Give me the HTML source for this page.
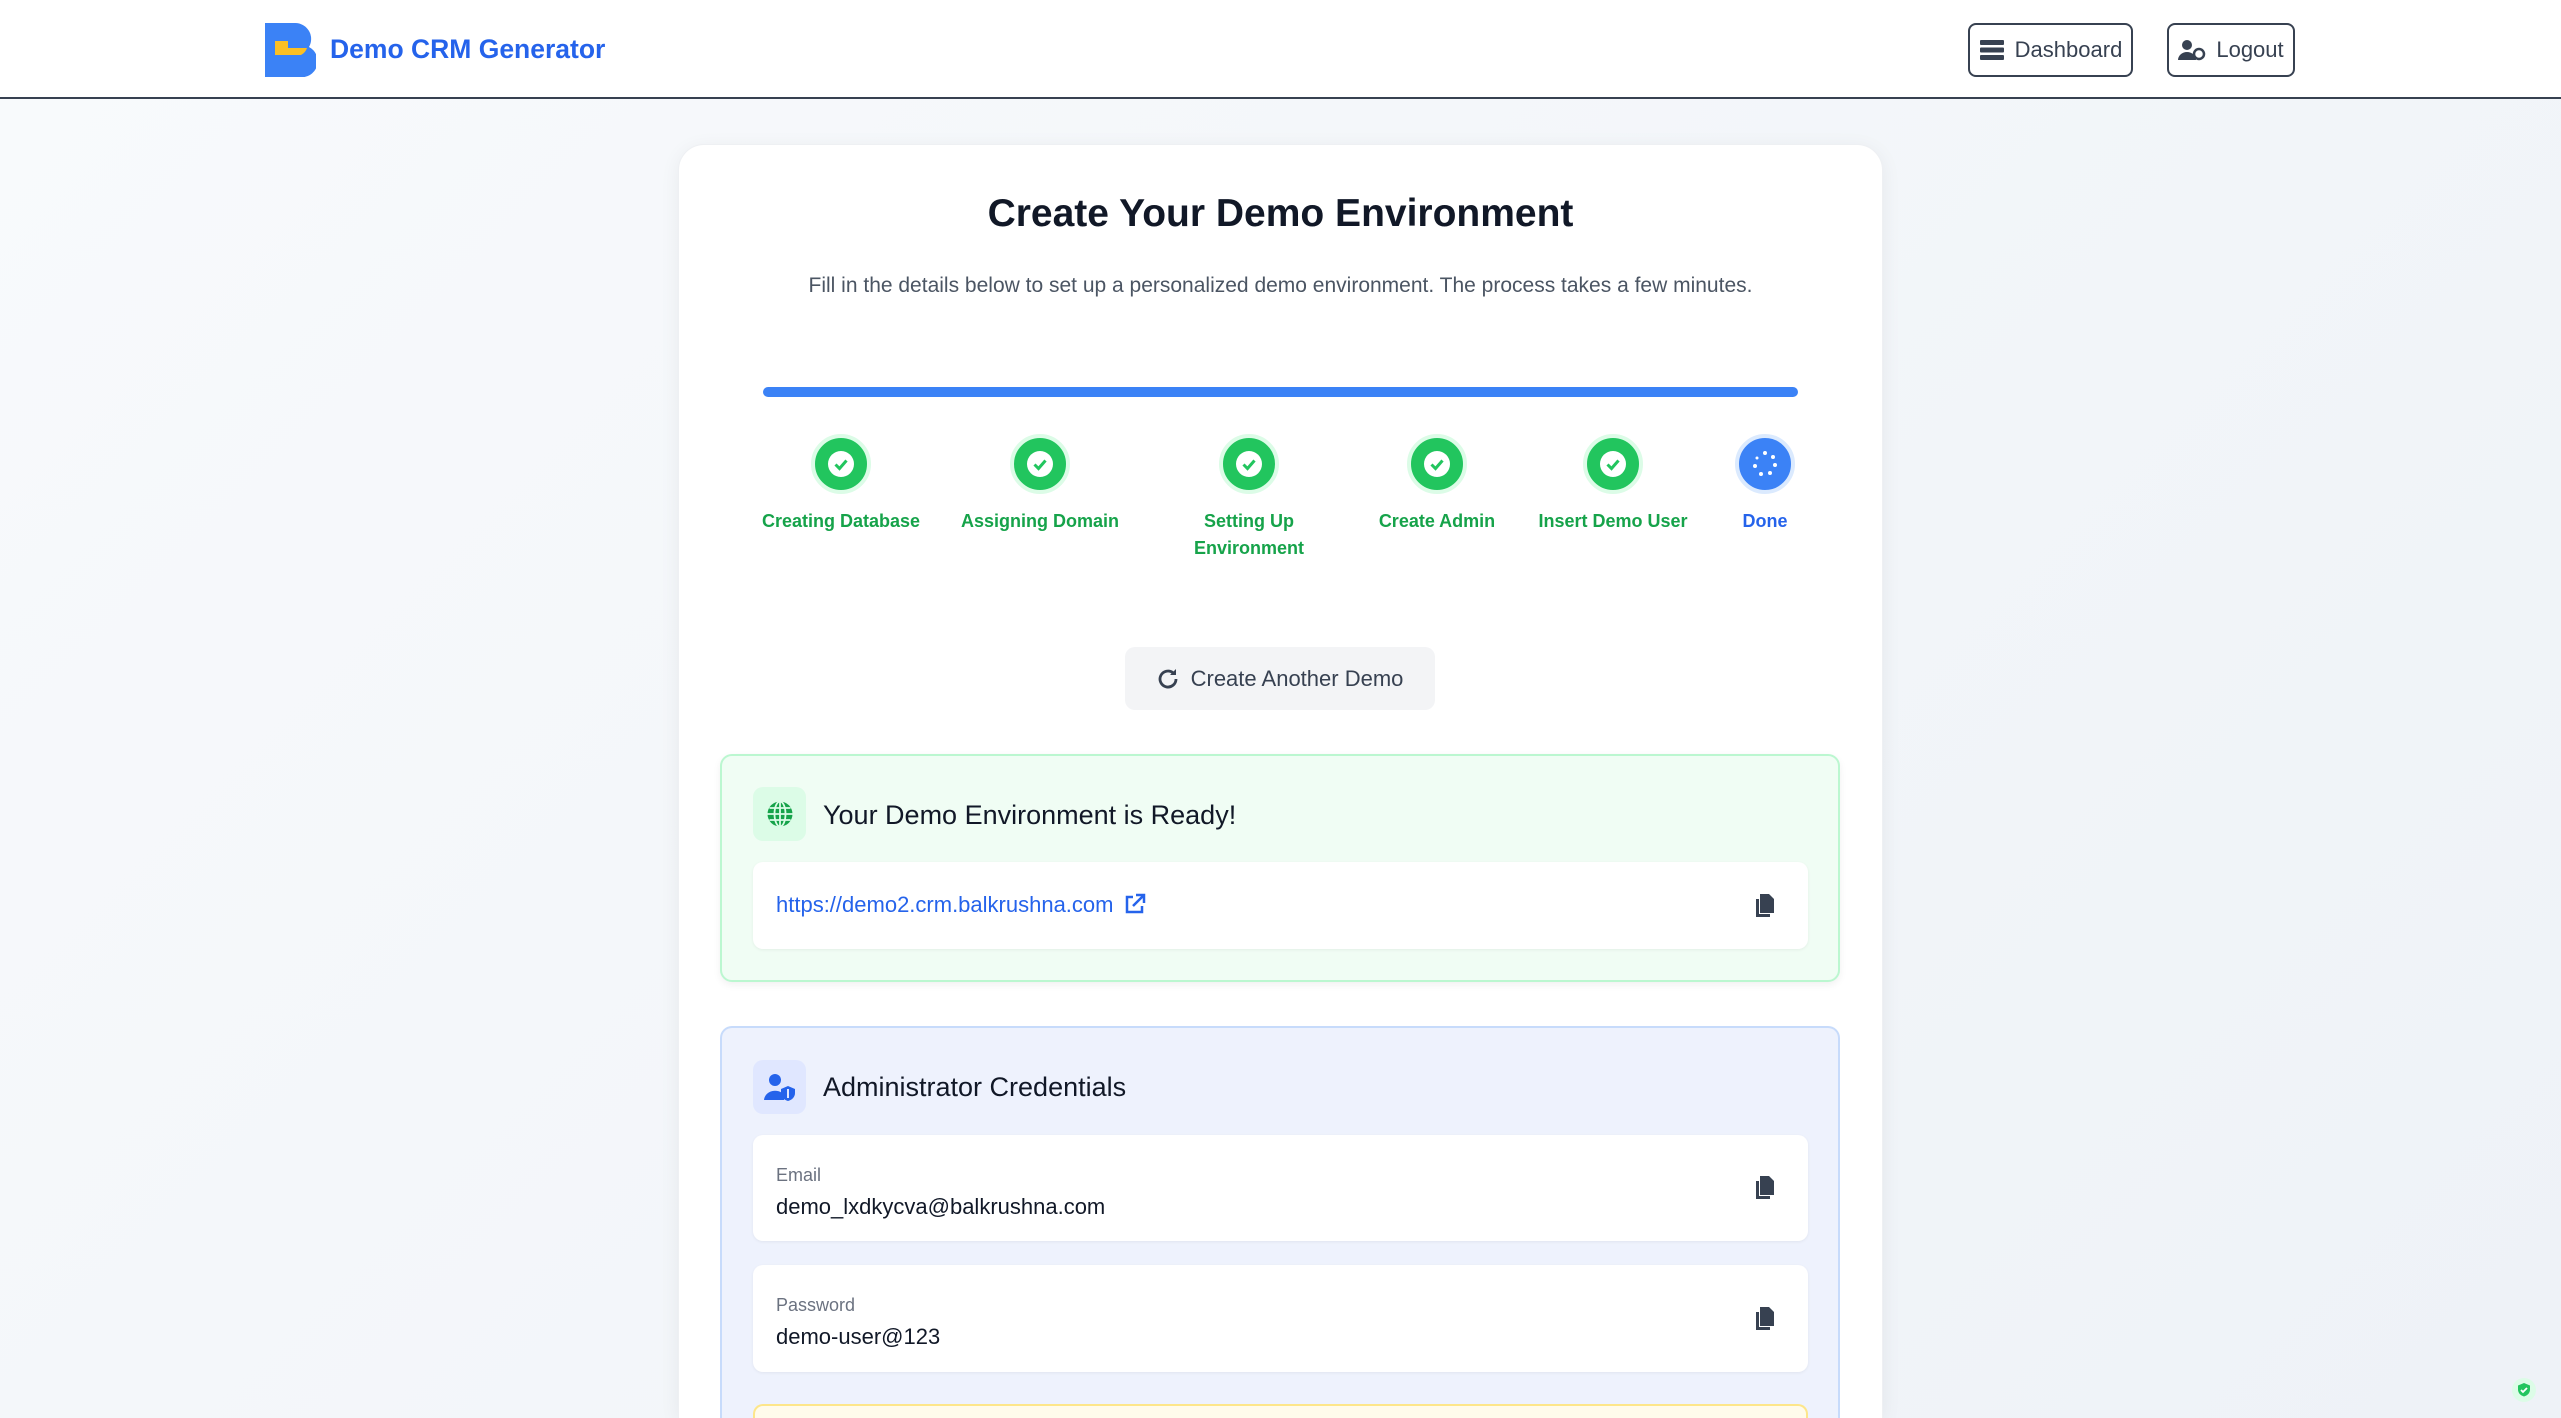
<!DOCTYPE html>
<html style="overflow:hidden;height:1418px"><head><meta charset="utf-8"><style>
*{box-sizing:border-box;margin:0;padding:0}
html,body{width:2561px;height:1418px;overflow:hidden}
body{font-family:"Liberation Sans",sans-serif;color:#111827}
#wrap{position:relative;width:2561px;height:1418px;overflow:hidden;background:linear-gradient(135deg,#f8fafc,#eef2f7)}
.abs{position:absolute}
header{position:absolute;left:0;top:0;width:2561px;height:99px;background:#fff;border-bottom:2px solid #374151}
.btn{position:absolute;top:23px;height:54px;border:2px solid #374151;border-radius:8px;background:#fff;display:flex;align-items:center;justify-content:center;gap:10px;font-size:22px;color:#374151}
.card{left:678px;top:144px;width:1205px;height:1274px;background:#fff;border-radius:26px 26px 0 0;box-shadow:0 4px 20px rgba(0,0,0,.06);border:1px solid #eef0f3;border-bottom:none}
.step{position:absolute;top:434px;width:200px;margin-left:-100px;text-align:center;font-size:18px;font-weight:bold;color:#16a34a;line-height:27px}
.circ{width:60px;height:60px;border-radius:50%;background:#22c55e;border:4px solid #dcfce7;margin:0 auto 14px;display:flex;align-items:center;justify-content:center}
.box{position:absolute;background:#fff;border-radius:10px;box-shadow:0 1px 3px rgba(0,0,0,.06)}
.copy{position:absolute;right:34px;top:50%;margin-top:-12px}
</style></head><body><div id="wrap">
<header>
<svg class="abs" style="left:265px;top:23px" width="51" height="54" viewBox="0 0 51 54"><path d="M0 0H30A16 16 0 0 1 44 24A16 16 0 0 1 34 54H0Z" fill="#3b82f6"/><path d="M10 18H23V25H42A12 12 0 0 1 36 32H10Z" fill="#fbbf24"/></svg>
<div class="abs" style="left:330px;top:34px;font-size:26.5px;font-weight:bold;color:#2563eb">Demo CRM Generator</div>
<div class="btn" style="left:1968px;width:165px"><svg width="26" height="22" viewBox="0 0 26 22"><rect x="1" y="1" width="24" height="5" rx="1" fill="#374151"/><rect x="1" y="8.5" width="24" height="5" rx="1" fill="#374151"/><rect x="1" y="16" width="24" height="5" rx="1" fill="#374151"/></svg>Dashboard</div>
<div class="btn" style="left:2167px;width:128px"><svg width="28" height="22" viewBox="0 0 28 22"><circle cx="9" cy="6" r="5" fill="#374151"/><path d="M0 21a9 8 0 0 1 18 0z" fill="#374151"/><circle cx="21" cy="15" r="5" fill="none" stroke="#374151" stroke-width="2.5"/></svg>Logout</div>
</header>
<div class="abs card"></div>
<div class="abs" style="left:678px;width:1205px;top:192px;text-align:center;font-size:39px;font-weight:bold;color:#111827">Create Your Demo Environment</div>
<div class="abs" style="left:678px;width:1205px;top:274px;text-align:center;font-size:21px;color:#4b5563">Fill in the details below to set up a personalized demo environment. The process takes a few minutes.</div>
<div class="abs" style="left:763px;top:387px;width:1035px;height:10px;border-radius:5px;background:#3b82f6"></div>
<div class="step" style="left:841px"><div class="circ"><svg width="26" height="26" viewBox="0 0 26 26"><circle cx="13" cy="13" r="13" fill="#fff"/><path d="M7.5 13.5l4 4 7-8" stroke="#22c55e" stroke-width="3" fill="none"/></svg></div>Creating Database</div>
<div class="step" style="left:1040px"><div class="circ"><svg width="26" height="26" viewBox="0 0 26 26"><circle cx="13" cy="13" r="13" fill="#fff"/><path d="M7.5 13.5l4 4 7-8" stroke="#22c55e" stroke-width="3" fill="none"/></svg></div>Assigning Domain</div>
<div class="step" style="left:1249px;width:130px;margin-left:-65px"><div class="circ"><svg width="26" height="26" viewBox="0 0 26 26"><circle cx="13" cy="13" r="13" fill="#fff"/><path d="M7.5 13.5l4 4 7-8" stroke="#22c55e" stroke-width="3" fill="none"/></svg></div>Setting Up Environment</div>
<div class="step" style="left:1437px"><div class="circ"><svg width="26" height="26" viewBox="0 0 26 26"><circle cx="13" cy="13" r="13" fill="#fff"/><path d="M7.5 13.5l4 4 7-8" stroke="#22c55e" stroke-width="3" fill="none"/></svg></div>Create Admin</div>
<div class="step" style="left:1613px"><div class="circ"><svg width="26" height="26" viewBox="0 0 26 26"><circle cx="13" cy="13" r="13" fill="#fff"/><path d="M7.5 13.5l4 4 7-8" stroke="#22c55e" stroke-width="3" fill="none"/></svg></div>Insert Demo User</div>
<div class="step" style="left:1765px;color:#2563eb"><div class="circ" style="background:#3b82f6;border-color:#dbeafe"><svg width="30" height="30" viewBox="0 0 30 30" fill="#fff"><circle cx="15" cy="4" r="2"/><circle cx="23" cy="8" r="2"/><circle cx="25" cy="16" r="2"/><circle cx="20" cy="24" r="2"/><circle cx="11" cy="25" r="2"/><circle cx="5" cy="17" r="2"/><circle cx="7" cy="9" r="1.5"/></svg></div>Done</div>
<div class="abs" style="left:1125px;top:647px;width:310px;height:63px;border-radius:10px;background:#f3f4f6;display:flex;align-items:center;justify-content:center;gap:12px;font-size:22px;color:#374151"><svg width="22" height="22" viewBox="0 0 22 22"><path d="M19 11a8 8 0 1 1-3-6.2" stroke="#374151" stroke-width="2.8" fill="none"/><path d="M19 1v6h-6z" fill="#374151"/></svg>Create Another Demo</div>
<div class="abs" style="left:720px;top:754px;width:1120px;height:228px;background:#f0fdf4;border:2px solid #bbf7d0;border-radius:12px;box-shadow:0 3px 8px rgba(0,0,0,.06)"></div>
<div class="abs" style="left:753px;top:787px;width:53px;height:54px;border-radius:10px;background:#dcfce7;display:flex;align-items:center;justify-content:center"><svg width="28" height="28" viewBox="0 0 28 28"><circle cx="14" cy="14" r="12.5" fill="#16a34a"/><path d="M14 1.5v25M1.5 14h25M3.5 8h21M3.5 20h21" stroke="#dcfce7" stroke-width="1.8"/><ellipse cx="14" cy="14" rx="5.5" ry="12.5" stroke="#dcfce7" stroke-width="1.8" fill="none"/></svg></div>
<div class="abs" style="left:823px;top:800px;font-size:27px;color:#111827">Your Demo Environment is Ready!</div>
<div class="box" style="left:753px;top:862px;width:1055px;height:87px"><div class="abs" style="left:23px;top:30px;font-size:22px;color:#2563eb">https://demo2.crm.balkrushna.com <svg width="22" height="22" viewBox="0 0 22 22" style="vertical-align:-3px;margin-left:4px"><path d="M9 4H3v15h15v-6" stroke="#2563eb" stroke-width="2.5" fill="none"/><path d="M12 2h8v8M20 2L9 13" stroke="#2563eb" stroke-width="2.5" fill="none"/></svg></div><svg class="copy" width="20" height="24" viewBox="0 0 20 24"><path d="M6 0h9l5 5v14H6z" fill="#374151"/><path d="M2 5h3v15h11v3H2z" fill="#374151"/></svg></div>
<div class="abs" style="left:720px;top:1026px;width:1120px;height:392px;background:#eef2fd;border:2px solid #c7dbfb;border-bottom:none;border-radius:12px 12px 0 0"></div>
<div class="abs" style="left:753px;top:1060px;width:53px;height:54px;border-radius:10px;background:#e0e7ff;display:flex;align-items:center;justify-content:center"><svg width="32" height="28" viewBox="0 0 32 28"><circle cx="11" cy="7" r="6" fill="#2563eb"/><path d="M0 27a11 10 0 0 1 20-5v5z" fill="#2563eb"/><path d="M24 13l7 3v4c0 4-3 7-7 8-4-1-7-4-7-8v-4z" fill="#2563eb"/><path d="M24 16v9" stroke="#e0e7ff" stroke-width="2"/></svg></div>
<div class="abs" style="left:823px;top:1072px;font-size:27px;color:#111827">Administrator Credentials</div>
<div class="box" style="left:753px;top:1135px;width:1055px;height:106px"><div class="abs" style="left:23px;top:30px;font-size:18px;color:#6b7280">Email</div><div class="abs" style="left:23px;top:59px;font-size:22px;color:#111827">demo_lxdkycva@balkrushna.com</div><svg class="copy" width="20" height="24" viewBox="0 0 20 24"><path d="M6 0h9l5 5v14H6z" fill="#374151"/><path d="M2 5h3v15h11v3H2z" fill="#374151"/></svg></div>
<div class="box" style="left:753px;top:1265px;width:1055px;height:107px"><div class="abs" style="left:23px;top:30px;font-size:18px;color:#6b7280">Password</div><div class="abs" style="left:23px;top:59px;font-size:22px;color:#111827">demo-user@123</div><svg class="copy" width="20" height="24" viewBox="0 0 20 24"><path d="M6 0h9l5 5v14H6z" fill="#374151"/><path d="M2 5h3v15h11v3H2z" fill="#374151"/></svg></div>
<div class="abs" style="left:753px;top:1404px;width:1055px;height:14px;border:2px solid #fde68a;border-bottom:none;border-radius:10px 10px 0 0;background:#fffbeb"></div>
<svg class="abs" style="left:2512px;top:1378px" width="24" height="24" viewBox="0 0 24 24"><circle cx="12" cy="12" r="12" fill="#dcfce7"/><path d="M12 5l6 2.5v4c0 3.5-2.5 6-6 7-3.5-1-6-3.5-6-7v-4z" fill="#22c55e"/><path d="M9 12l2 2 4-4" stroke="#fff" stroke-width="1.8" fill="none"/></svg>
</div></body></html>
